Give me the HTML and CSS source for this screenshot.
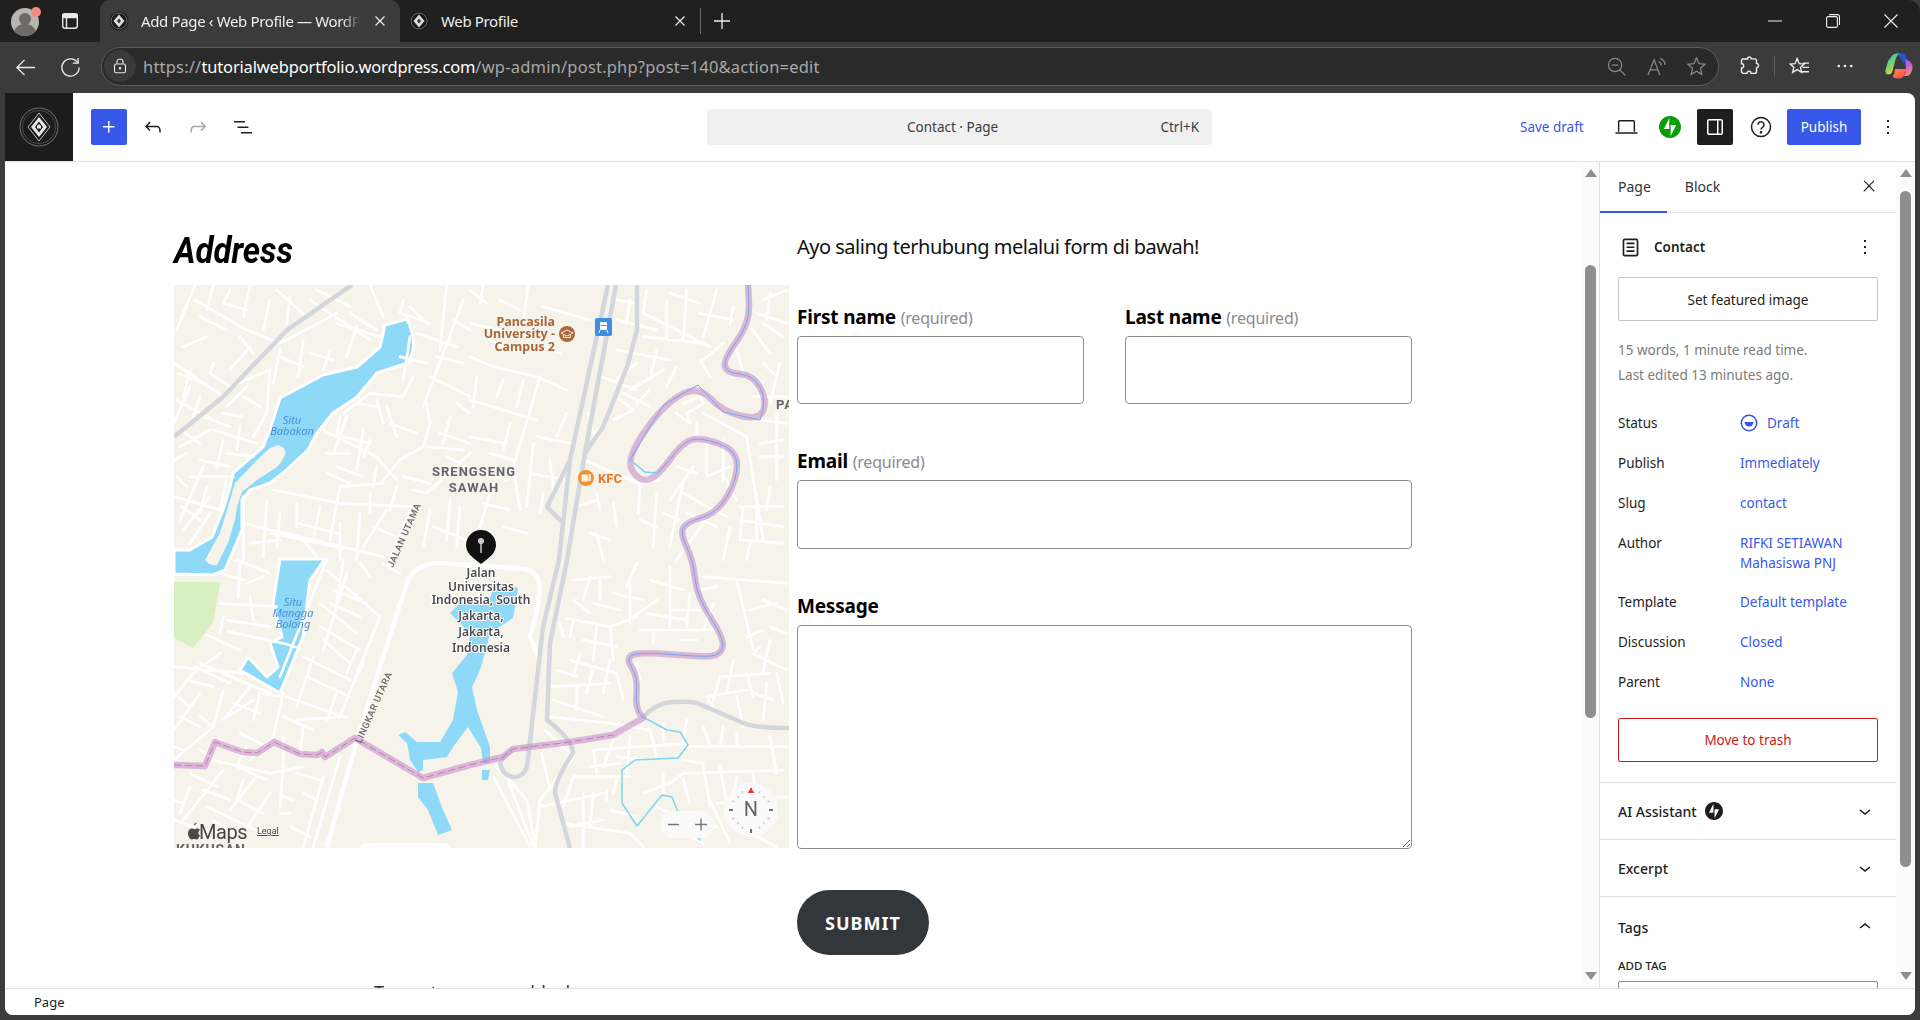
FILE: index.html
```html
<!DOCTYPE html>
<html lang="en">
<head>
<meta charset="utf-8">
<title>Add Page ‹ Web Profile — WordPress.com</title>
<link rel="stylesheet" href="styles.css">
</head>
<body>
<div class="tabbar">
  <div class="profile">
    <svg class="avatar" viewBox="0 0 32 32"><circle cx="15" cy="17" r="14" fill="#b9b5b2"/><circle cx="15" cy="14" r="6" fill="#6d6a68"/><path d="M4 26c3-6 7-7 11-7s8 1 11 7c-3 3-7 5-11 5s-8-2-11-5z" fill="#6d6a68"/><circle cx="26" cy="7" r="5" fill="#f28b82"/></svg>
  </div>
  <svg class="tabs-ico" viewBox="0 0 20 20" fill="none" stroke="#e8e8e8" stroke-width="1.4"><rect x="2.7" y="2.7" width="14.6" height="14.6" rx="2.5"/><path d="M6.500 6.500v11"/><path d="M3 3.500h14v3H3z" fill="#e8e8e8"/></svg>
  <div class="tab active">
    <svg class="fav" viewBox="0 0 20 20"><circle cx="10" cy="10" r="9.500" fill="#1b1b1b"/><circle cx="10" cy="10" r="8" fill="none" stroke="#888" stroke-width=".7"/><path d="M10 3.500 15.500 10 10 16.500 4.500 10z" fill="#ddd"/><path d="M10 7.500 12 10l-2 2.500L8 10z" fill="#333"/></svg>
    <span class="tab-title fade">Add Page ‹ Web Profile — WordPress.com</span>
    <svg class="tab-x" viewBox="0 0 12 12" stroke="#eee" stroke-width="1.2"><path d="M1.500 1.500l9 9M10.500 1.500l-9 9"/></svg>
  </div>
  <div class="tab">
    <svg class="fav" viewBox="0 0 20 20"><circle cx="10" cy="10" r="9.500" fill="#1b1b1b"/><circle cx="10" cy="10" r="8" fill="none" stroke="#888" stroke-width=".7"/><path d="M10 3.500 15.500 10 10 16.500 4.500 10z" fill="#ddd"/><path d="M10 7.500 12 10l-2 2.500L8 10z" fill="#333"/></svg>
    <span class="tab-title">Web Profile</span>
    <svg class="tab-x" viewBox="0 0 12 12" stroke="#eee" stroke-width="1.2"><path d="M1.500 1.500l9 9M10.500 1.500l-9 9"/></svg>
  </div>
  <span class="tab-sep"></span>
  <svg class="newtab" viewBox="0 0 18 18" stroke="#eee" stroke-width="1.3"><path d="M9 1v16M1 9h16"/></svg>
  <div class="winctl">
    <svg viewBox="0 0 14 14" stroke="#eee" stroke-width="1"><path d="M0 7h14"/></svg>
    <svg viewBox="0 0 14 14" fill="none" stroke="#eee" stroke-width="1.1"><rect x=".6" y="2.6" width="10.8" height="10.8" rx="1.5"/><path d="M3 .6h8.500a2 2 0 0 1 2 2V11"/></svg>
    <svg viewBox="0 0 14 14" stroke="#eee" stroke-width="1.1"><path d="M.5.5l13 13M13.500.5l-13 13"/></svg>
  </div>
</div>

<div class="toolbar">
  <svg class="nav-back" viewBox="0 0 22 22" fill="none" stroke="#eee" stroke-width="1.4"><path d="M21 11H2M10 3l-8 8 8 8"/></svg>
  <svg class="nav-reload" viewBox="0 0 22 22" fill="none" stroke="#eee" stroke-width="1.4"><path d="M18.500 6A9 9 0 1 0 20 11"/><path d="M19 1v5.500h-5.500"/></svg>
  <div class="omnibox">
    <span class="lock"><svg viewBox="0 0 16 18" fill="none" stroke="#e6e6e6" stroke-width="1.3"><rect x="1.7" y="6.700" width="12.600" height="10" rx="2"/><path d="M4.500 6.500V4.500a3.500 3.500 0 0 1 7 0v2"/><circle cx="8" cy="11.700" r=".8" fill="#e6e6e6"/></svg></span>
    <span class="url"><span class="dim">https://</span>tutorialwebportfolio.wordpress.com<span class="dim">/wp-admin/post.php?post=140&amp;action=edit</span></span>
    <svg class="omni-ico" viewBox="0 0 20 20" fill="none" stroke="#8b8b8b" stroke-width="1.300"><circle cx="8.500" cy="8.500" r="7"/><path d="M13.500 13.500l6 6M5 8.500h7"/></svg>
    <svg class="omni-ico" viewBox="0 0 20 20" fill="none" stroke="#8b8b8b" stroke-width="1.300"><path d="M1 19 7.500 3l6 16M3.500 13.500h8M12 5a4 4 0 0 1 3 4M14 1.500a8 8 0 0 1 5 7"/></svg>
    <svg class="omni-ico" viewBox="0 0 20 20" fill="none" stroke="#8b8b8b" stroke-width="1.300"><path d="M10 1l2.700 6 6.300.6-4.800 4.300 1.400 6.400L10 15l-5.600 3.300 1.400-6.400L1 7.600 7.300 7z"/></svg>
  </div>
  <svg class="bar-ico puzzle" viewBox="0 0 20 20" fill="none" stroke="#eee" stroke-width="1.400"><path d="M8 1.500c1.500-1 3-.3 3.300 1.400H15a1.500 1.500 0 0 1 1.500 1.500v3c2.500-.3 3 4.500 0 4.500v3.500a2 2 0 0 1-2 2H11c.3-2.800-4-2.800-4 0H3.500a2 2 0 0 1-2-2V12c3 .3 3-4.500 0-4.300V4.500A1.500 1.500 0 0 1 3 3h4.700c-.2-.6 0-1.100.3-1.500z"/></svg>
  <span class="bar-sep"></span>
  <svg class="bar-ico fav-list" viewBox="0 0 22 20" fill="none" stroke="#eee" stroke-width="1.400"><path d="M8.500 1.500 10.700 7l5.300.4-4 3.500 1.300 5.300-4.800-2.900-4.700 2.900L5 10.900 1 7.400 6.300 7zM15 6.500h6M14 11h7M12.500 15.500H21"/></svg>
  <svg class="bar-ico dots" viewBox="0 0 18 4" fill="#eee"><circle cx="2" cy="2" r="1.500"/><circle cx="9" cy="2" r="1.500"/><circle cx="16" cy="2" r="1.500"/></svg>
  <svg class="copilot" viewBox="0 0 28 26">
    <defs>
      <linearGradient id="cpa" x1="0" y1="0" x2=".6" y2="1"><stop offset="0" stop-color="#2ac3de"/><stop offset=".5" stop-color="#6fd06e"/><stop offset="1" stop-color="#f5d13c"/></linearGradient>
      <linearGradient id="cpb" x1="0" y1="0" x2="1" y2=".3"><stop offset="0" stop-color="#1f6fe8"/><stop offset="1" stop-color="#2a3fd0"/></linearGradient>
      <linearGradient id="cpc" x1="0" y1="0" x2=".3" y2="1"><stop offset="0" stop-color="#8a5ce6"/><stop offset=".6" stop-color="#d562c8"/><stop offset="1" stop-color="#f58a7a"/></linearGradient>
      <linearGradient id="cpd" x1="0" y1="0" x2="1" y2="1"><stop offset="0" stop-color="#ff8a3c"/><stop offset="1" stop-color="#ee4a5e"/></linearGradient>
    </defs>
    <path d="M7 3c1-1.500 2.500-2.500 5-2.500h3c-2.500 1-3.500 3-4.500 6L7.500 18c-.8 2.500-2 3.500-4 3.500-2.500 0-3.500-2-3-4.500L3 8z" fill="url(#cpa)"/>
    <path d="M12 .5h5c2.500 0 4 1.500 4.500 4L23 9l-5 1-2-5c-.5-1.500-2-2.500-4-4.500z" fill="url(#cpb)"/>
    <path d="M20 6l2.500 1c2.500 1 5 3.500 5 7 0 4-2 8-5 9h-4c2-1.500 3-4 2.500-7z" fill="url(#cpc)"/>
    <path d="M10 16h11c.5 4-2 9-6 9.500h-3c-2 0-4-1-4.500-3 2 0 2-3.500 2.500-6.500z" fill="url(#cpd)"/>
  </svg>
</div>

<div class="page">
  <header class="wp-header">
    <div class="site-logo">
      <svg viewBox="0 0 40 40"><circle cx="20" cy="20" r="19" fill="none" stroke="#8a8a8a" stroke-width=".8"/><circle cx="20" cy="20" r="16.500" fill="none" stroke="#666" stroke-width=".6"/><path d="M20 6 31 20 20 34 9 20z" fill="none" stroke="#cfcfcf" stroke-width=".9"/><path d="M20 10 28 20 20 30 12 20z" fill="#e8e8e8"/><path d="M20 14.500 24 20 20 25.500 16 20z" fill="#1c1c1c"/><path d="M20 17l2 2v2.500h-4V19z" fill="#e8e8e8"/></svg>
    </div>
    <div class="tools-left">
      <button class="inserter"><svg viewBox="0 0 24 24" fill="#fff"><path d="M11 12.500V17.500H12.500V12.500H17.500V11H12.500V6H11V11H6V12.500H11Z"/></svg></button>
      <svg class="wp-ico" viewBox="0 0 24 24" fill="#1e1e1e"><path d="M18.300 11.700c-.6-.6-1.400-.9-2.300-.9H6.700l2.900-3.300-1.100-1-4.500 5L8.500 16l1-1-2.700-2.700H16c.5 0 .9.2 1.300.5 1 1 1 3.400 1 4.500v.3h1.500v-.2c0-1.500 0-4.300-1.500-5.700z"/></svg>
      <svg class="wp-ico" viewBox="0 0 24 24" fill="#a7a7a7"><path d="M15.600 6.500l-1.100 1 2.900 3.300H8c-.9 0-1.700.3-2.300.9-1.400 1.500-1.400 4.200-1.400 5.600v.2h1.500v-.3c0-1.100 0-3.500 1-4.500.3-.3.7-.5 1.300-.5h9.200L14.500 15l1.100 1.100 4.600-4.600-4.600-5z"/></svg>
      <svg class="wp-ico" viewBox="0 0 24 24" fill="#1e1e1e"><path d="M3 6h11v1.500H3V6zm3.500 5.500h11V13h-11v-1.500zM21 17H10v1.500h11V17z"/></svg>
    </div>
    <div class="command">
      <span class="cmd-title">Contact · Page</span>
      <span class="cmd-key">Ctrl+K</span>
    </div>
    <div class="tools-right">
      <span class="save-draft">Save draft</span>
      <svg class="laptop" viewBox="0 0 24 16" fill="none" stroke="#1e1e1e" stroke-width="1.500"><path d="M3.800 13V2.500a1 1 0 0 1 1-1h14.400a1 1 0 0 1 1 1V13"/><path d="M.5 14.200h23"/></svg>
      <svg class="jetpack" viewBox="0 0 32 32"><path fill="#069e08" fill-rule="evenodd" d="M16 0C7.200 0 0 7.200 0 16s7.200 16 16 16 16-7.200 16-16S24.800 0 16 0zM15 19H7l8-16v16zm2-6v16l8-16h-8z"/></svg>
      <button class="panel-toggle"><svg viewBox="0 0 24 24" fill="#fff"><path d="M18 4H6c-1.100 0-2 .9-2 2v12c0 1.100.9 2 2 2h12c1.100 0 2-.9 2-2V6c0-1.100-.9-2-2-2zm-4 14.500H6c-.3 0-.5-.2-.5-.5V6c0-.3.2-.5.5-.5h8v13zm4.500-.5c0 .3-.2.5-.5.5h-2.500v-13H18c.3 0 .5.2.5.5v12z"/></svg></button>
      <svg class="help" viewBox="0 0 22 22" fill="none" stroke="#1e1e1e" stroke-width="1.500"><circle cx="11" cy="11" r="9.500"/><path d="M8 8.700a3 3 0 1 1 4.500 2.600c-1 .6-1.500 1.100-1.500 2.200"/><circle cx="11" cy="16.300" r=".6" fill="#1e1e1e"/></svg>
      <button class="publish">Publish</button>
      <svg class="kebab" viewBox="0 0 24 24" fill="#1e1e1e"><path d="M13 19h-2v-2h2v2zm0-6h-2v-2h2v2zm0-6h-2V5h2v2z"/></svg>
    </div>
  </header>

  <div class="editor">
    <main class="canvas">
      <div class="columns">
        <section class="col-map">
          <h2 class="address">Address</h2>
          <svg class="map" viewBox="174 285 615 563" role="img" aria-label="Map">
            <rect x="174" y="285" width="615" height="563" fill="#f6f3ea"/>
            <path d="M174 582H220L213 623 193 648 174 638z" fill="#d8efc0"/>
            <!-- water -->
            <g fill="#8ed9f8" stroke="#fff" stroke-width="3" stroke-linejoin="round">
              <path d="M385 325 407 319Q415 335 413 350L408 363 377 373 357 397 333 413 317 433 308 450 283 473 270 483 250 490 242 500 242 530 225 570 213 575 174 574V550H190L212 537 223 510 230 487 233 473 263 447 270 430 280 398 323 375 357 367 380 347z"/>
              <path d="M280 559H325L310 580 303 637 280 693 240 670 248 657 267 677 278 667 270 643 282 637 273 603z"/>
            </g>
            <path d="M278 445Q287 448 285 455 282 462 277 467L257 480 242 492 237 507 235 520 228 543 217 565Q209 566 205 560L220 533 228 507 235 483 257 460 270 448z" fill="#f6f3ea"/>
            <g fill="#8ed9f8">
              <path d="M500 583 518 588 515 607 513 618 490 633 485 653 480 670 472 687 477 710 490 747V763H483L481 748 468 727 453 747 447 757 423 760 423 770 418 772 410 760 407 743 398 735 405 732 417 742 440 742 453 720 458 692 452 673 467 655 470 633 450 613 460 603 490 598 493 590z"/>
              <path d="M418 783 433 783 443 810 452 830 438 835 428 810 418 797z"/>
              <path d="M482 770H490L488 780H482z"/>
            </g>
            <!-- roads -->
            <g class="roads" transform="translate(170 280) scale(.3333)">
              <path d="M75 15 20 150M75 60 230 150 330 190 500 100M180 30 160 70 230 90M330 210 310 310M400 180 385 290M480 210 460 270M560 140 530 230M630 170 500 130M540 100 620 150M12 250 160 350M130 250 120 280 180 320 300 270M300 270 290 400 250 470M170 380 230 320M160 400 215 410M20 360 130 420M12 430 60 320M30 500 120 450M130 450 260 490M160 480 140 560M50 520 12 540M60 590 190 590M100 560 30 720M12 650 150 690M40 750 120 650M120 700 60 790M700 60 690 100 780 130M720 80 770 130M830 15 810 210M880 60 760 380M780 290 900 350M770 370 780 430 760 500 690 540 640 600M600 340 700 350 730 290M600 340 520 400M620 360 640 430M510 410 500 470M530 410 490 520M460 450 620 530 680 600M470 520 540 520M580 450 560 570M510 620 480 780M310 630 510 670 730 680M470 580 540 610M510 620 640 610M730 630 770 640 900 520M810 460 900 490M830 530 890 560M220 650 220 840M290 660 280 830M380 670 380 740M385 730 500 760M510 730 510 840M570 700 560 840M220 730 640 830M720 690 660 840M650 690 580 800M300 760 500 800M600 15 640 110M420 60 600 180M320 30 410 110M440 30 540 80"/>
              <path d="M130 15 110 90M240 15 220 110M300 60 280 150M360 50 350 130M90 110 170 150M40 200 110 170M240 200 180 270M210 170 250 220M330 230 400 260M420 220 490 240M25 280 100 310M60 270 40 350M220 350 270 380M90 350 70 410M100 410 180 440M210 440 200 510M30 450 90 490M170 520 250 530M90 540 180 560M20 590 50 620M110 620 90 700M170 600 150 690M35 680 90 720M740 160 860 200M850 120 900 150M800 230 880 250M690 230 770 250M720 170 700 300M650 380 680 470M660 430 740 460M560 370 620 380M520 470 600 490M600 480 580 530M500 560 580 590M620 560 610 620M700 590 780 610M770 500 880 510M840 410 820 490M860 370 900 400M330 700 320 800M450 680 430 780M600 640 600 700M680 620 660 690M780 690 760 800M840 660 830 780M240 790 330 780M400 780 440 830M610 740 700 780M790 740 890 780M870 680 860 800"/>
            </g>
            <g class="roads" transform="translate(470 280) scale(.3333)">
              <path d="M0 30 50 70M0 130 170 170M220 80 360 120M40 15 30 70M175 15 160 130M0 230 70 260 200 290 290 330M210 290 130 560 150 690M0 360 200 420M120 430 100 510M200 470 300 490M190 490 170 680M0 470 100 490M290 400 260 470M355 400 370 460 385 450M395 290 500 330M440 210 600 240M440 60 500 70M520 170 700 190M590 60 590 180M650 30 640 180M740 30 700 170M520 100 720 200M790 80 780 130M690 240 720 290M480 330 580 270M450 360 490 390 430 420M540 330 500 370M340 540 510 610 505 700M510 610 570 600M380 640 390 690M430 670 440 740M320 680 380 660M620 400 660 430 650 400 700 370 690 350 640 370M680 430 680 470M700 400 830 470 850 600 880 780M880 250 920 290M840 140 900 220M820 280 800 210M920 400 920 600M870 490 940 480M870 530 940 530M620 560 680 580M600 660 670 560M640 640 770 710M710 490 710 590 780 560M640 600 600 800M650 700 740 740M810 680 940 680M810 720 940 740M820 680 810 780M860 680 860 780M820 780 940 790M700 730 620 840M360 760 420 780M380 760 400 840M880 60 950 30M860 100 950 130"/>
              <path d="M90 60 150 90M60 180 130 210M20 290 10 380M100 300 80 350M160 300 140 380M230 200 270 220M440 120 560 150M480 60 470 130M530 30 520 100M600 40 690 70M690 100 790 120M880 130 940 170M900 40 890 120M930 250 900 370M500 250 440 300M560 210 540 300M620 260 590 320M460 340 540 380M760 190 700 240M850 350 950 350M870 420 950 430M240 540 250 630M60 520 130 540M40 580 110 600M70 610 30 740M40 670 120 690M100 740 170 760M180 580 290 600M220 640 210 700M760 480 760 600M770 600 800 660M580 700 630 720M510 720 560 740M560 640 550 800M900 620 890 690M780 740 760 840M840 790 830 840"/>
            </g>
            <g class="roads" transform="translate(470 560) scale(.3333)">
              <path d="M310 60 420 50M310 120 360 160M290 175 420 200 500 170M420 200 430 300M280 230 270 190M330 280 310 350M340 240 440 260M300 300 440 340M390 120 390 60M480 70 480 190M490 170 560 120M510 210 740 210M600 150 690 150M550 220 550 250M630 240 680 240M690 90 740 80M500 10 470 80M600 20 600 200M800 60 850 270M700 50 950 70M880 120 950 150M830 230 880 210M870 260 850 280 950 330M760 350 900 340M790 300 770 400M710 410 830 390M710 410 730 440M800 410 820 500M890 370 880 480M850 400 910 420M245 380 420 370M320 380 320 450M250 420 400 470M240 470 420 490 540 510M500 310 510 360M430 540 400 620M540 510 560 590M370 570 650 550M370 570 380 640M310 650 480 650M310 650 280 740M340 700 340 860M210 740 400 700M410 690 410 720M280 790 480 820 520 860M520 700 600 670 640 640 940 630M580 640 580 700M700 620 720 740M650 560 950 560M900 530 920 640M800 520 800 560M950 710 740 730M640 660 660 730M720 720 780 850M840 820 920 860M225 510 310 590M215 580 240 690M750 620 770 730M110 650 190 860M70 650 180 860"/>
              <path d="M370 130 450 150M430 100 520 120M540 60 640 90M360 50 340 120M530 160 650 180M660 100 650 200M730 130 700 210M310 180 300 230M380 200 370 300M370 320 350 400M420 300 400 400M260 330 320 350M440 340 460 420M840 150 920 130M900 200 950 220M900 240 880 330M750 350 730 420M920 340 940 430M830 340 850 410M650 480 640 550M580 490 580 540M700 500 720 560M760 500 750 560M480 530 470 640M440 590 520 600M360 620 450 610M370 700 360 800M440 660 430 700M300 800 400 780M420 750 500 770M560 740 640 780M660 780 740 800M800 650 790 720M850 640 860 730M640 600 700 610M880 720 900 800M820 750 920 770M600 800 700 850"/>
            </g>
            <g class="roads" transform="translate(170 560) scale(.3333)">
              <path d="M210 0 205 110M150 130 320 140M200 0 300 40M230 70 280 50M170 180 300 200M175 215 340 250 390 265M110 225 210 270M90 310 300 400M12 320 220 340M75 320 180 370M150 280 70 340 12 410M50 360 130 380M90 400 12 510M160 390 130 500M240 380 160 480 250 420M280 400 330 410M340 400 310 530 240 600M350 410 520 470M270 400 250 480M340 470 430 510M90 470 130 500 12 600M12 560 40 570M60 640 140 680M130 600 300 640 400 620M200 620 290 660M40 780 160 630M12 720 40 730M260 650 180 750M110 740 300 830M300 700 220 820M340 530 340 600M390 550 390 590M340 610 330 740M340 710 370 720M330 760 360 760M510 590 430 860M460 650 400 860M470 0 330 350M470 30 630 170 510 470M490 90 590 130M450 130 560 220M530 40 460 270M450 200 570 270M400 290 540 360M430 290 380 440M410 350 540 410M380 480 530 470M640 10 690 40M600 50 570 10M520 0 500 130"/>
              <path d="M150 40 220 60M240 110 250 180M160 170 150 220M12 400 60 440M30 470 90 500M190 430 270 460M210 520 290 560M150 540 220 590M90 570 150 610M230 560 200 620M60 680 30 760M12 780 70 800M100 690 180 720M200 720 280 760M220 660 200 720M130 780 200 830M380 640 450 660M400 700 440 720M360 800 420 830M560 350 580 310M480 130 570 170M460 240 540 310M560 270 530 340M500 400 470 480M400 500 390 590"/>
            </g>
            <path class="road-big" d="M327 847 355 747 383 657 407 583Q415 565 435 563 480 565 525 569 540 573 540 590 538 610 530 637L540 660"/>
            <path class="road-big thin" d="M495 765 527 800 535 848M575 755 540 800 535 848"/>
            <!-- motorways -->
            <g class="motor">
              <path d="M352 285 287 330 223 397 174 437"/>
              <path d="M608 285 570 460 559 560 543 627 527 767Q523 777 515 777 503 777 500 763 503 757 513 749"/>
              <path d="M616 285 585 453 567 560 550 643 547 720Q573 740 573 753 555 780 555 793L570 848"/>
              <path d="M637 285 637 330 627 367 603 427 585 453"/>
              <path d="M570 460 547 507 562 522"/>
              <path d="M643 717Q658 702 673 702 685 701 697 703L743 723Q755 728 789 728"/>
            </g>
            <!-- routes -->
            <g fill="none" stroke-linejoin="round" stroke-linecap="round">
              <path stroke="#7fd5f3" stroke-width="1.500" d="M643 717 667 730 680 732 688 745 678 758 635 760 622 770 622 803 637 826 662 795 672 797 678 812 700 840"/>
              <path stroke="#c88fc8" stroke-opacity=".6" stroke-width="6.500" d="M174 765 205 766 215 742 242 752 257 753 274 742 300 754 317 755 322 752 325 757 355 738 423 778 470 765 503 757 513 749 570 742 613 735 643 718Q635 710 636.500 693.500Q638 677 631.500 667Q625 657 634 654.500Q643 652 673 654.500Q703 657 711.500 656Q720 655 722.500 647.500Q725 640 711 618.500Q697 597 695 578.500Q693 560 686.500 546.500Q680 533 683.500 527.500Q687 522 702 517.500Q717 513 727 496.500Q737 480 737 465Q737 450 718.500 443.500Q700 437 691 440Q682 443 669.500 460Q657 477 648.500 479.500Q640 482 632.500 471Q625 460 644 432.500Q663 405 680.500 395Q698 385 710.500 398.500Q723 412 741.500 416Q760 420 763.500 410Q767 400 760 387.500Q753 375 740 374Q727 373 725 366.500Q723 360 736.500 341.500Q750 323 749 304L748 285"/>
              <path stroke="#c779c4" stroke-width="1" stroke-dasharray="7 4" d="M174 765 205 766 215 742 242 752 257 753 274 742 300 754 317 755 322 752 325 757 355 738 423 778 470 765 503 757 513 749 570 742 613 735"/>
              <path stroke="#6fa8ee" stroke-width="1" d="M643 718Q635 710 636.500 693.500Q638 677 631.500 667Q625 657 634 654.500Q643 652 673 654.500Q703 657 711.500 656Q720 655 722.500 647.500Q725 640 711 618.500Q697 597 695 578.500Q693 560 686.500 546.500Q680 533 683.500 527.500Q687 522 702 517.500Q717 513 727 496.500Q737 480 737 465Q737 450 718.500 443.500Q700 437 691 440Q682 443 669.500 460L658 473"/>
              <path stroke="#6fd0f3" stroke-width="1.500" d="M658 473 645 472 630 460"/>
              <path stroke="#6fa8ee" stroke-width="1" d="M630 460Q650 425 664 405Q680 395 698 385Q710 398 723 412Q741 416 760 420Q767 400 760 387.500Q753 375 740 374Q727 373 725 366.500Q723 360 736.500 341.500Q750 323 749 304L748 285"/>
            </g>
            <!-- labels -->
            <g class="lbl-poi" text-anchor="end"><text x="555" y="326">Pancasila</text><text x="555" y="338">University -</text><text x="555" y="351">Campus 2</text></g>
            <circle cx="567" cy="334" r="8" fill="#a9693f"/><path d="M561 333l6-3 6 3-6 3zM563.500 335v2.500h7V335" fill="none" stroke="#f5e8da" stroke-width="1"/>
            <rect x="595" y="318" width="17" height="18" rx="2" fill="#3d8ee8"/><rect x="600" y="322" width="7" height="8" rx="1" fill="#fff"/><path d="M600.500 325.500h6" stroke="#3d8ee8"/><path d="M600 330l-1 3M607 330l1 3" stroke="#fff"/>
            <g class="lbl-area" text-anchor="middle"><text x="474" y="476">SRENGSENG</text><text x="474" y="492">SAWAH</text></g>
            <text class="lbl-area" x="776" y="409">PA</text>
            <circle cx="586" cy="478" r="8" fill="#f5912c"/><rect x="581.500" y="474.500" width="7" height="7" fill="#fff" opacity=".9"/><path d="M590 474v7" stroke="#fff" stroke-width="1.500"/>
            <text class="lbl-kfc" x="598" y="483">KFC</text>
            <g class="lbl-water" text-anchor="middle"><text x="292" y="424">Situ</text><text x="292" y="435">Babakan</text><text x="293" y="606">Situ</text><text x="293" y="617">Mangga</text><text x="293" y="628">Bolong</text></g>
            <text class="lbl-road" transform="translate(393 568) rotate(-66)">JALAN UTAMA</text>
            <text class="lbl-road" transform="translate(361 744) rotate(-66)">LINGKAR UTARA</text>
            <!-- pin -->
            <path d="M481 530a15 15 0 0 1 15 15c0 8-6 12-15 19-9-7-15-11-15-19a15 15 0 0 1 15-15z" fill="#111"/>
            <circle cx="481" cy="541" r="3" fill="#ccc"/><path d="M481 543v10" stroke="#ccc" stroke-width="1.500"/>
            <g class="lbl-pin" text-anchor="middle"><text x="481" y="577">Jalan</text><text x="481" y="591">Universitas</text><text x="481" y="604">Indonesia, South</text><text x="481" y="620">Jakarta,</text><text x="481" y="636">Jakarta,</text><text x="481" y="652">Indonesia</text></g>
            <!-- controls -->
            <g fill="#4a4a4a"><path d="M194 825c1.200-.1 2.500-.9 2.900-2.600-1.500.2-3 1.300-2.900 2.600zM200 835.500c-1 2.200-2 4-3.200 4-1 0-1.500-.6-2.600-.6s-1.600.6-2.600.6c-1.500 0-3.600-3-3.600-6.200 0-3 2-4.700 3.900-4.700 1.100 0 1.900.7 2.500.7s1.600-.8 2.800-.8c1.200 0 2.300.6 3 1.600-2.500 1.500-2.100 4.400-.2 5.400z"/></g>
            <text class="lbl-maps" x="199" y="839">Maps</text>
            <text class="lbl-legal" x="257" y="834">Legal</text>
            <text class="lbl-kuk" x="176" y="855">KUKUSAN</text>
            <rect x="360" y="843" width="90" height="12" rx="6" fill="#fff"/>
            <rect x="660" y="811" width="54" height="27" rx="13" fill="#fafafa"/>
            <path d="M668 824.500h11M695 824.500h12M701 818.500v12" stroke="#777" stroke-width="1.400"/>
            <circle cx="751" cy="810" r="27" fill="#fafafa"/>
            <path d="M751 788v3M751 829v4M729 810h4M769 810h4" stroke="#444" stroke-width="1.500"/>
            <path d="M737 796l2 2M765 796l-2 2M737 824l2-2M765 824l-2-2M742 791l1 2.500M760 791l-1 2.500M742 829l1-2.500M760 829l-1-2.500M732 801l2.500 1M770 801l-2.500 1M732 819l2.500-1M770 819l-2.500-1" stroke="#ccc" stroke-width="1.400"/>
            <path d="M751 788l3.500 5h-7z" fill="#f33"/>
            <text class="lbl-n" x="751" y="816" text-anchor="middle">N</text>
          </svg>
        </section>
        <section class="col-form">
          <p class="lead">Ayo saling terhubung melalui form di bawah!</p>
          <form class="form">
            <div class="two">
              <label class="field"><span class="lbl">First name <em>(required)</em></span><input class="in" type="text"></label>
              <label class="field"><span class="lbl">Last name <em>(required)</em></span><input class="in" type="text"></label>
            </div>
            <label class="field"><span class="lbl">Email <em>(required)</em></span><input class="in tall" type="text"></label>
            <label class="field"><span class="lbl">Message</span><textarea class="ta"></textarea></label>
            <button class="submit" type="button">SUBMIT</button>
          </form>
        </section>
      </div>
      <p class="terms">Terms to ensure a block</p>
    </main>
    <div class="scroll scroll-a"><i class="up"></i><b class="thumb"></b><i class="down"></i></div>
    <aside class="sidebar">
      <div class="side-tabs">
        <span class="side-tab on">Page</span>
        <span class="side-tab">Block</span>
        <svg class="side-x" viewBox="0 0 24 24" fill="#1e1e1e"><path d="M13 11.800l6.100-6.300-1-1-6.100 6.200-6.100-6.200-1 1 6.100 6.300-6.500 6.700 1 1 6.500-6.600 6.500 6.600 1-1z"/></svg>
      </div>
      <div class="panel">
        <div class="title-row">
          <svg class="doc" viewBox="0 0 24 24" fill="#1e1e1e"><path d="M15.500 7.500h-7V9h7V7.500Zm-7 3.500h7v1.500h-7V11Zm7 3.500h-7V16h7v-1.500Z"/><path d="M17 4H7a2 2 0 0 0-2 2v12a2 2 0 0 0 2 2h10a2 2 0 0 0 2-2V6a2 2 0 0 0-2-2ZM7 5.500h10a.5.5 0 0 1 .5.5v12a.5.5 0 0 1-.5.5H7a.5.5 0 0 1-.5-.5V6a.5.5 0 0 1 .5-.5Z"/></svg>
          <strong>Contact</strong>
          <svg class="doc-more" viewBox="0 0 24 24" fill="#1e1e1e"><path d="M13 19h-2v-2h2v2zm0-6h-2v-2h2v2zm0-6h-2V5h2v2z"/></svg>
        </div>
        <button class="btn-outline">Set featured image</button>
        <p class="meta">15 words, 1 minute read time.<br>Last edited 13 minutes ago.</p>
        <dl class="rows">
          <div class="row"><dt>Status</dt><dd class="with-ico"><svg viewBox="0 0 18 18" fill="none"><circle cx="9" cy="9" r="7.700" stroke="#3858e9" stroke-width="1.500"/><path d="M4.500 8h9a4.500 4.500 0 0 1-9 0z" fill="#3858e9"/></svg>Draft</dd></div>
          <div class="row"><dt>Publish</dt><dd>Immediately</dd></div>
          <div class="row"><dt>Slug</dt><dd>contact</dd></div>
          <div class="row row-author"><dt>Author</dt><dd>RIFKI SETIAWAN<br>Mahasiswa PNJ</dd></div>
          <div class="row"><dt>Template</dt><dd>Default template</dd></div>
          <div class="row"><dt>Discussion</dt><dd>Closed</dd></div>
          <div class="row"><dt>Parent</dt><dd>None</dd></div>
        </dl>
        <button class="btn-trash">Move to trash</button>
      </div>
      <div class="acc"><span class="acc-name">AI Assistant<svg viewBox="0 0 32 32"><path fill="#1e1e1e" fill-rule="evenodd" d="M16 0C7.200 0 0 7.200 0 16s7.200 16 16 16 16-7.200 16-16S24.800 0 16 0zM15 19H7l8-16v16zm2-6v16l8-16h-8z"/></svg></span><svg class="chev" viewBox="0 0 24 24" fill="#1e1e1e"><path d="M17.500 11.600L12 16l-5.500-4.400.9-1.200L12 14l4.500-3.600 1 1.200z"/></svg></div>
      <div class="acc"><span class="acc-name">Excerpt</span><svg class="chev" viewBox="0 0 24 24" fill="#1e1e1e"><path d="M17.500 11.600L12 16l-5.500-4.400.9-1.200L12 14l4.500-3.600 1 1.200z"/></svg></div>
      <div class="acc open"><span class="acc-name">Tags</span><svg class="chev" viewBox="0 0 24 24" fill="#1e1e1e"><path d="M6.500 12.400L12 8l5.500 4.400-.9 1.200L12 10l-4.500 3.600-1-1.200z"/></svg></div>
      <div class="tags-body"><span class="add-tag">ADD TAG</span><div class="tag-input"></div></div>
    </aside>
    <div class="scroll scroll-b"><i class="up"></i><b class="thumb"></b><i class="down"></i></div>
  </div>
  <footer class="status">Page</footer>
</div>
</body>
</html>
```
FILE: styles.css
```css
* { box-sizing: border-box; }
html, body { margin: 0; height: 100%; }
body { width: 1920px; height: 1020px; overflow: hidden; background: #3b3b3b; font-family: "Noto Sans", "Open Sans", sans-serif; color: #1e1e1e; }
svg { display: block; flex: none; }
button { font-family: inherit; cursor: default; }

/* browser chrome */
.tabbar { height: 42px; background: #202020; display: flex; align-items: center; color: #eee; font-size: 14px; border-top-right-radius: 12px; }
.profile { width: 50px; padding-left: 10px; }
.avatar { width: 32px; height: 32px; }
.tabs-ico { width: 20px; height: 20px; margin-left: 10px; }
.tab { width: 300px; height: 42px; display: flex; align-items: center; padding: 0 14px 0 9px; flex: none; border-radius: 10px 10px 0 0; }
.tab.active { background: #3b3b3b; margin-left: 20px; }
.fav { width: 20px; height: 20px; margin-right: 12px; }
.tab-title { flex: 1; white-space: nowrap; overflow: hidden; font-size: 15px; letter-spacing: -.35px; }
.fade { -webkit-mask-image: linear-gradient(90deg, #000 92%, transparent 100%); mask-image: linear-gradient(90deg, #000 92%, transparent 100%); }
.tab-x { width: 12px; height: 12px; margin-left: 14px; }
.tab-sep { width: 1px; height: 26px; background: #6a6a6a; }
.newtab { width: 18px; height: 18px; margin-left: 12px; }
.winctl { margin-left: auto; display: flex; gap: 44px; padding-right: 22px; }
.winctl svg { width: 14px; height: 14px; }

.toolbar { height: 51px; background: #3b3b3b; display: flex; align-items: center; padding: 0 0 0 15px; }
.nav-back { width: 21px; height: 21px; }
.nav-reload { width: 21px; height: 21px; margin-left: 24px; }
.omnibox { margin-left: 20px; width: 1618px; height: 39px; border: 1px solid #5d5d5d; border-radius: 20px; background: #2a2a2a; display: flex; align-items: center; margin-top: -3px; padding-right: 12px; }
.lock { width: 32px; height: 32px; margin-left: 2px; border-radius: 50%; background: #3a3a3a; display: flex; align-items: center; justify-content: center; }
.lock svg { width: 14px; height: 16px; }
.url { margin-left: 7px; font-size: 16.500px; color: #fff; white-space: nowrap; flex: 1; letter-spacing: -.17px; }
.dim { color: #a9a9a9; letter-spacing: .2px; }
.omni-ico { width: 19px; height: 19px; margin-left: 21px; }
.bar-ico { margin-top: -3px; }
.puzzle { width: 20px; height: 20px; margin-left: 21px; }
.bar-sep { width: 1px; height: 20px; background: #5d5d5d; margin: -3px 0 0 14px; }
.fav-list { width: 21px; height: 19px; margin-left: 14px; }
.dots { width: 16px; height: 4px; margin-left: 27px; }
.copilot { width: 28px; height: 26px; margin: -3px 0 0 32px; }

/* page */
.page { margin-left: 5px; width: 1910px; height: 922px; background: #fff; border-radius: 0 8px 8px 8px; overflow: hidden; display: flex; flex-direction: column; }
.wp-header { height: 69px; flex: none; border-bottom: 1px solid #e0e0e0; display: flex; align-items: center; position: relative; }
.site-logo { width: 68px; height: 68px; background: #1c1c1c; display: flex; align-items: center; justify-content: center; flex: none; }
.site-logo svg { width: 40px; height: 40px; }
.tools-left { display: flex; align-items: center; margin-left: 18px; gap: 9px; }
.inserter { width: 36px; height: 36px; border: 0; border-radius: 2px; background: #3858e9; padding: 6px; }
.wp-ico { width: 24px; height: 24px; margin-left: 5px; margin-right: 7px; }
.command { position: absolute; left: 702px; top: 16px; width: 505px; height: 36px; background: #f0f0f0; border-radius: 4px; font-size: 13.500px; display: flex; align-items: center; color: #3c3c3c; }
.cmd-title { margin-left: 200px; }
.cmd-key { margin-left: auto; margin-right: 13px; }
.tools-right { margin-left: auto; display: flex; align-items: center; }
.save-draft { font-size: 13.500px; color: #3858e9; width: 64px; white-space: nowrap; }
.laptop { width: 23px; height: 16px; margin-left: 31px; }
.jetpack { width: 22px; height: 22px; margin-left: 21px; }
.panel-toggle { width: 36px; height: 36px; margin-left: 16px; background: #1e1e1e; border: 0; border-radius: 2px; padding: 6px; }
.help { width: 22px; height: 22px; margin-left: 17px; }
.publish { width: 74px; height: 36px; margin-left: 15px; background: #3858e9; color: #fff; border: 0; border-radius: 2px; font-size: 13.500px; padding: 0; }
.kebab { width: 24px; height: 24px; margin-left: 15px; margin-right: 15px; }

.editor { flex: 1; min-height: 0; display: flex; }
.canvas { flex: 1; min-width: 0; padding: 28px 0 0 169px; overflow: hidden; }
.columns { display: grid; grid-template-columns: 615px 615px; column-gap: 8px; }
.address { margin: 31px 0 14px; height: 50px; font: italic 700 36px/50px "Roboto", sans-serif; color: #000; padding-top: 5px; transform: scaleX(.915); transform-origin: 0 50%; }
.map { width: 615px; height: 563px; filter: blur(.35px); }
.map .roads path { fill: none; stroke: #fff; stroke-width: 8; stroke-linejoin: round; stroke-linecap: round; }
.road-big { fill: none; stroke: #fff; stroke-width: 4.500; }
.road-big.thin { stroke-width: 3; }
.motor path { fill: none; stroke: #d3d6da; stroke-width: 4.500; stroke-linejoin: round; }
.lbl-poi text { font: 700 12.500px "Noto Sans", sans-serif; fill: #a8683c; }
.lbl-area, .lbl-area text { font: 700 13px "Roboto", sans-serif; letter-spacing: 1px; fill: #62666b; }
.lbl-kfc { font: 700 13px "Roboto", sans-serif; fill: #f0741c; }
.lbl-water text { font: italic 400 11px "Noto Sans", sans-serif; fill: #4d8fd6; }
.lbl-road { font: 500 9.500px "Roboto", sans-serif; letter-spacing: .4px; fill: #6a6a6a; }
.lbl-pin text { font: 600 12px "Noto Sans", sans-serif; fill: #4a4a4a; stroke: #fff; stroke-width: 2px; paint-order: stroke; }
.lbl-maps { font: 400 20px "Roboto", sans-serif; fill: #444; letter-spacing: -.4px; }
.lbl-legal { font: 400 9px "Roboto", sans-serif; fill: #444; text-decoration: underline; }
.lbl-kuk { font: 700 14px "Roboto", sans-serif; fill: #666; letter-spacing: .8px; }
.lbl-n { font: 400 20px "Roboto", sans-serif; fill: #666; }

.lead { margin: 43px 0 40px; height: 32px; font-size: 20px; line-height: 28px; color: #111; letter-spacing: -.5px; }
.form { display: flex; flex-direction: column; width: 615px; }
.two { display: grid; grid-template-columns: 287px 287px; column-gap: 41px; }
.field { display: flex; flex-direction: column; margin-bottom: 45px; }
.lbl { font-weight: 700; font-size: 19px; line-height: 24px; height: 31px; color: #000; letter-spacing: -.2px; }
.lbl em { font-style: normal; font-weight: 400; font-size: 16px; color: #8a8a8a; letter-spacing: -.2px; }
.in { display: block; width: 100%; height: 68px; border: 1px solid #8d8d8d; border-radius: 4px; background: #fff; padding: 0 10px; }
.in.tall { height: 69px; }
.ta { display: block; width: 100%; height: 224px; border: 1px solid #8d8d8d; border-radius: 4px; background: #fff; margin: 0; }
.submit { align-self: flex-start; margin-top: -4px; width: 132px; height: 65px; border: 0; border-radius: 34px; background: #32373c; color: #fff; font-size: 18px; font-weight: 700; letter-spacing: 1px; padding: 0; }
.terms { margin: 25px 0 0 200px; font-size: 18px; color: #333; }

/* scrollbars */
.scroll { flex: none; width: 17px; background: #fbfbfb; position: relative; display: flex; flex-direction: column; align-items: center; }
.up, .down { position: absolute; left: 50%; margin-left: -6px; width: 0; height: 0; border-left: 6px solid transparent; border-right: 6px solid transparent; }
.up { top: 7px; border-bottom: 8px solid #8f8f8f; }
.down { bottom: 8px; border-top: 8px solid #8f8f8f; }
.thumb { display: block; width: 11px; background: #8f8f8f; border-radius: 6px; }
.scroll-a .thumb { margin-top: 103px; height: 453px; }
.scroll-b { width: 19px; }
.scroll-b .thumb { margin-top: 29px; height: 676px; }

/* sidebar */
.sidebar { flex: none; width: 297px; border-left: 1px solid #e0e0e0; overflow: hidden; font-size: 13.500px; }
.side-tabs { height: 51px; border-bottom: 1px solid #e0e0e0; display: flex; align-items: center; position: relative; padding: 0 0 2px 18px; gap: 34px; color: #333; font-size: 14px; }
.side-tab.on::after { content: ""; position: absolute; left: 0; bottom: -1px; width: 67px; height: 2px; background: #3858e9; }
.side-x { width: 18px; height: 18px; margin-left: auto; margin-right: 18px; }
.panel { padding: 0 18px; border-bottom: 1px solid #e0e0e0; height: 570px; max-height: 559px; }
.title-row { height: 46px; margin-top: 11px; display: flex; align-items: center; }
.title-row strong { font-weight: 600; font-size: 13.500px; margin-left: 10px; }
.doc { width: 27px; height: 27px; margin-left: -1px; }
.doc-more { width: 24px; height: 24px; margin-left: auto; margin-right: 1px; }
.btn-outline { display: block; width: 260px; height: 44px; margin-top: 7px; background: #fff; border: 1px solid #c4c4c4; border-radius: 2px; font-size: 13.500px; color: #1e1e1e; padding: 2px 0 0; }
.meta { margin: 17px 0 0; line-height: 25px; color: #7c7c7c; }
.rows { margin: 25px 0 0; display: flex; flex-direction: column; gap: 20px; }
.row { display: flex; line-height: 20px; }
.row-author { margin-bottom: -1px; }
.row dt { width: 122px; flex: none; }
.row dd { margin: 0; color: #3858e9; }
.with-ico { display: flex; align-items: center; }
.with-ico svg { width: 18px; height: 18px; margin-right: 9px; }
.btn-trash { display: block; width: 260px; height: 44px; margin-top: 26px; background: #fff; border: 1px solid #cc1818; border-radius: 2px; color: #cc1818; font-size: 13.500px; padding: 0; }
.acc { height: 57px; border-bottom: 1px solid #e0e0e0; display: flex; align-items: center; padding: 0 18px; font-size: 14px; font-weight: 500; }
.acc.open { border-bottom: 0; height: 60px; }
.acc-name { display: flex; align-items: center; gap: 8px; }
.acc-name svg { width: 18px; height: 18px; }
.chev { width: 24px; height: 24px; margin-left: auto; margin-right: 1px; }
.tags-body { padding: 0 18px; }
.add-tag { display: block; font-size: 11.500px; font-weight: 500; line-height: 14px; height: 22px; margin-top: 2px; }
.tag-input { height: 36px; width: 260px; border: 1px solid #8d8d8d; border-radius: 2px; }

.status { height: 27px; flex: none; border-top: 1px solid #e0e0e0; padding-left: 29px; font-size: 13px; line-height: 26px; background: #fff; position: relative; color: #1e1e1e; }
```
